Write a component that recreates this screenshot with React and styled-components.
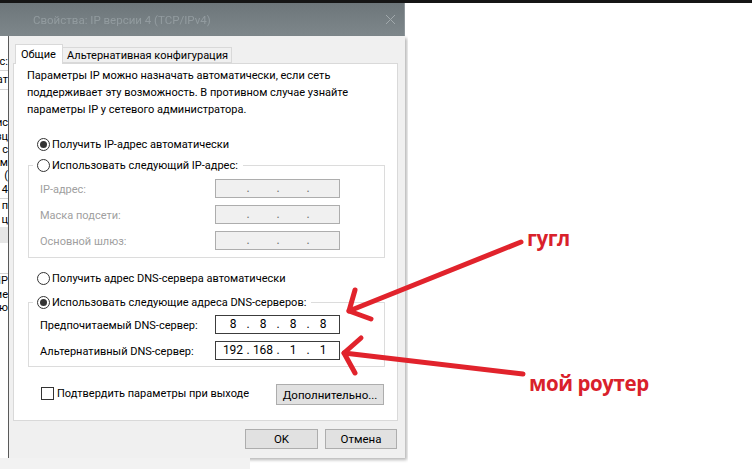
import React from 'react';
import styled, { createGlobalStyle } from 'styled-components';

const GlobalStyle = createGlobalStyle`
  html, body {
    margin: 0;
    padding: 0;
    background: #fff;
  }
  body {
    font-family: Roboto, "Noto Sans", sans-serif;
    font-size: 11px;
    color: #000;
  }
`;

const Screen = styled.div`
  position: relative;
  width: 752px;
  height: 469px;
  overflow: hidden;
  background: #fff;
  display: flex;
  flex-direction: column;
`;

const TopLine = styled.div`
  flex: none;
  height: 3px;
  background: #151515;
`;

const Desktop = styled.div`
  flex: 1;
  display: flex;
  min-height: 0;
`;

const DialogColumn = styled.div`
  flex: none;
  width: 408px;
  display: flex;
  flex-direction: column;
`;

const TitleBar = styled.div`
  flex: none;
  width: 405px;
  height: 33px;
  box-sizing: border-box;
  padding: 0 8px 0 33px;
  display: flex;
  align-items: center;
  justify-content: space-between;
  background: linear-gradient(#6d767a, #7e878b);
  border-right: 1px solid #8e969a;
`;

const Title = styled.span`
  color: #929b9f;
  font-size: 11.5px;
  filter: blur(0.4px);
`;

const WindowRow = styled.div`
  flex: none;
  height: 422px;
  display: flex;
`;

const BackStrip = styled.div`
  flex: none;
  width: 8px;
  border-right: 1px solid #5c5c5c;
  background: #fff;
  overflow: hidden;
  display: flex;
  flex-direction: column;
  padding-top: 18px;
`;

const Fragment = styled.div`
  flex: none;
  height: ${(p) => p.h || 14}px;
  overflow: hidden;
  display: flex;
  justify-content: flex-end;
  white-space: nowrap;
  line-height: ${(p) => p.h || 14}px;
  background: ${(p) => (p.shade ? '#e6e6e6' : 'transparent')};
  border-bottom: ${(p) => (p.line ? '1px solid #d4d4d4' : 'none')};
`;

const DialogBody = styled.div`
  flex: none;
  width: 396px;
  box-sizing: border-box;
  padding: 8px 7px 0 4px;
  background: #f0f0f0;
  display: flex;
  flex-direction: column;
  box-shadow: 2px 2px 3px rgba(0, 0, 0, 0.28);
`;

const TabRow = styled.div`
  height: 19px;
  padding-left: 2px;
  display: flex;
  align-items: flex-end;
`;

const Tab = styled.div`
  position: relative;
  z-index: ${(p) => (p.active ? 1 : 0)};
  box-sizing: border-box;
  width: ${(p) => p.w}px;
  height: ${(p) => (p.active ? 20 : 16)}px;
  margin-bottom: ${(p) => (p.active ? -1 : 0)}px;
  padding-left: ${(p) => (p.active ? 5 : 4)}px;
  display: flex;
  align-items: center;
  background: ${(p) => (p.active ? '#fff' : '#f0f0f0')};
  border: 1px solid #d9d9d9;
  border-bottom: ${(p) => (p.active ? 'none' : '1px solid #d9d9d9')};
  border-left: ${(p) => (p.active ? '1px solid #d9d9d9' : 'none')};
  white-space: nowrap;
`;

const Panel = styled.div`
  height: 358px;
  box-sizing: border-box;
  padding: 3px 12px 0 13px;
  background: #fff;
  border: 1px solid #d9d9d9;
  display: flex;
  flex-direction: column;
`;

const Description = styled.p`
  margin: 0;
  line-height: 17px;
`;

const RadioRow = styled.label`
  display: flex;
  align-items: center;
  height: 20px;
  margin-top: ${(p) => p.mt || 0}px;
  margin-left: ${(p) => (p.inLegend ? 0 : 10)}px;
  white-space: nowrap;
`;

const RadioCircle = styled.span`
  flex: none;
  width: 13px;
  height: 13px;
  box-sizing: border-box;
  border-radius: 50%;
  border: 1px solid #333;
  background: #fff;
  display: flex;
  align-items: center;
  justify-content: center;
  margin-right: 2px;

  &::after {
    content: '';
    width: 7px;
    height: 7px;
    border-radius: 50%;
    background: ${(p) => (p.checked ? '#333' : 'transparent')};
  }
`;

const Group = styled.fieldset`
  margin: ${(p) => p.mt || 0}px 0 0 1px;
  padding: ${(p) => p.pt}px 0 ${(p) => p.pb}px 11px;
  border: 1px solid #dcdcdc;
  min-inline-size: 0;
  display: flex;
  flex-direction: column;
  gap: 7px;
`;

const Legend = styled.legend`
  margin-left: -7px;
  padding: 0 5px 0 4px;
`;

const FieldRow = styled.div`
  display: grid;
  grid-template-columns: 175px 125px;
  align-items: center;
  height: 19px;
`;

const FieldLabel = styled.span`
  color: ${(p) => (p.disabled ? '#a0a0a0' : '#000')};
  padding-top: 2px;
`;

const IpBox = styled.div`
  height: 19px;
  box-sizing: border-box;
  padding-left: 4px;
  border: 1px solid ${(p) => (p.disabled ? '#adadad' : '#3c3c3c')};
  background: ${(p) => (p.disabled ? '#f0f0f0' : '#fff')};
  display: grid;
  grid-template-columns: 26px 4px 26px 4px 26px 4px 26px;
  align-items: center;
  text-align: center;
  font-size: 12px;
  line-height: 17px;
  color: ${(p) => (p.disabled ? '#6d6d6d' : '#000')};
`;

const BottomRow = styled.div`
  margin: 17px 1px 0 14px;
  height: 21px;
  display: flex;
  align-items: center;
  justify-content: space-between;
`;

const CheckRow = styled.label`
  display: flex;
  align-items: center;
  margin-top: -3px;
`;

const CheckBox = styled.span`
  width: 13px;
  height: 13px;
  box-sizing: border-box;
  border: 1px solid #333;
  background: #fff;
  margin-right: 3px;
`;

const Button = styled.button`
  width: ${(p) => p.w}px;
  height: ${(p) => p.h || 20}px;
  box-sizing: border-box;
  padding: 0;
  border: 1px solid #adadad;
  background: #e1e1e1;
  font-family: inherit;
  font-size: 11.5px;
  color: #000;
`;

const ButtonRow = styled.div`
  margin: 8px 1px 0 0;
  display: flex;
  justify-content: flex-end;
  gap: 7px;
`;

const BelowDialog = styled.div`
  flex: 1;
  display: flex;
`;

const BelowShade = styled.div`
  width: 250px;
  background: #f2f2f2;
`;

const RightArea = styled.div`
  position: relative;
  flex: 1;
  background: #fff;
`;

const Note = styled.span`
  position: absolute;
  left: ${(p) => p.x}px;
  top: ${(p) => p.y}px;
  font-family: "Open Sans", sans-serif;
  font-weight: 700;
  font-size: 20.5px;
  line-height: 22px;
  letter-spacing: -0.4px;
  color: #d9212b;
  white-space: nowrap;
`;

const Arrows = styled.svg`
  position: absolute;
  left: 0;
  top: 0;
  pointer-events: none;
`;

function Radio({ checked, children, mt, inLegend }) {
  return (
    <RadioRow mt={mt} inLegend={inLegend}>
      <RadioCircle checked={checked} />
      {children}
    </RadioRow>
  );
}

function IpField({ parts, disabled }) {
  const cells = parts || ['', '', '', ''];
  return (
    <IpBox disabled={disabled}>
      {cells.map((c, i) => (
        <React.Fragment key={i}>
          {i > 0 && <span>.</span>}
          <span>{c}</span>
        </React.Fragment>
      ))}
    </IpBox>
  );
}

const backFragments = [
  { t: 'ес:', h: 16, line: true },
  { t: 'ат', h: 18, line: true },
  { t: '', h: 26 },
  { t: 'ис', h: 14 },
  { t: 'зц', h: 13 },
  { t: 'с', h: 13 },
  { t: 'м', h: 13 },
  { t: '(', h: 13 },
  { t: '4', h: 16, line: true },
  { t: 'п', h: 14 },
  { t: 'ц', h: 14 },
  { t: '', h: 16, shade: true },
  { t: '', h: 30, line: true },
  { t: 'IP', h: 14 },
  { t: 'ие', h: 13 },
  { t: 'ю', h: 13 },
];

export default function App() {
  return (
    <>
      <GlobalStyle />
      <Screen>
        <TopLine />
        <Desktop>
          <DialogColumn>
            <TitleBar>
              <Title>Свойства: IP версии 4 (TCP/IPv4)</Title>
              <svg width="11" height="11" viewBox="0 0 11 11">
                <path d="M1 1 L10 10 M10 1 L1 10" stroke="#a1a9ac" strokeWidth="1" />
              </svg>
            </TitleBar>
            <WindowRow>
              <BackStrip>
                {backFragments.map((f, i) => (
                  <Fragment key={i} h={f.h} line={f.line} shade={f.shade}>
                    {f.t}
                  </Fragment>
                ))}
              </BackStrip>
              <DialogBody>
                <TabRow>
                  <Tab active w={48}>Общие</Tab>
                  <Tab w={169}>Альтернативная конфигурация</Tab>
                </TabRow>
                <Panel>
                  <Description>
                    Параметры IP можно назначать автоматически, если сеть
                    <br />
                    поддерживает эту возможность. В противном случае узнайте
                    <br />
                    параметры IP у сетевого администратора.
                  </Description>

                  <Radio checked mt={16}>Получить IP-адрес автоматически</Radio>
                  <Group mt={1} pt={4} pb={7}>
                    <Legend>
                      <Radio inLegend>Использовать следующий IP-адрес:</Radio>
                    </Legend>
                    <FieldRow>
                      <FieldLabel disabled>IP-адрес:</FieldLabel>
                      <IpField disabled />
                    </FieldRow>
                    <FieldRow>
                      <FieldLabel disabled>Маска подсети:</FieldLabel>
                      <IpField disabled />
                    </FieldRow>
                    <FieldRow>
                      <FieldLabel disabled>Основной шлюз:</FieldLabel>
                      <IpField disabled />
                    </FieldRow>
                  </Group>

                  <Radio mt={10}>Получить адрес DNS-сервера автоматически</Radio>
                  <Group mt={4} pt={3} pb={6}>
                    <Legend>
                      <Radio checked inLegend>Использовать следующие адреса DNS-серверов:</Radio>
                    </Legend>
                    <FieldRow>
                      <FieldLabel>Предпочитаемый DNS-сервер:</FieldLabel>
                      <IpField parts={['8', '8', '8', '8']} />
                    </FieldRow>
                    <FieldRow>
                      <FieldLabel>Альтернативный DNS-сервер:</FieldLabel>
                      <IpField parts={['192', '168', '1', '1']} />
                    </FieldRow>
                  </Group>

                  <BottomRow>
                    <CheckRow>
                      <CheckBox />
                      Подтвердить параметры при выходе
                    </CheckRow>
                    <Button w={108} h={21}>Дополнительно...</Button>
                  </BottomRow>
                </Panel>
                <ButtonRow>
                  <Button w={73}>OK</Button>
                  <Button w={72}>Отмена</Button>
                </ButtonRow>
              </DialogBody>
            </WindowRow>
            <BelowDialog>
              <BelowShade />
            </BelowDialog>
          </DialogColumn>
          <RightArea>
            <Note x={119} y={224}>гугл</Note>
            <Note x={121} y={369}>мой роутер</Note>
          </RightArea>
        </Desktop>
        <Arrows width="752" height="469" viewBox="0 0 752 469">
          <g stroke="#e1232c" strokeWidth="5" strokeLinecap="round" fill="none">
            <path d="M521 242 L349 311" />
            <path d="M355 290 L349 311 L371 319" strokeLinejoin="round" />
            <path d="M523 374 L344 353" />
            <path d="M361 338 L344 353 L355 373" strokeLinejoin="round" />
          </g>
        </Arrows>
      </Screen>
    </>
  );
}
